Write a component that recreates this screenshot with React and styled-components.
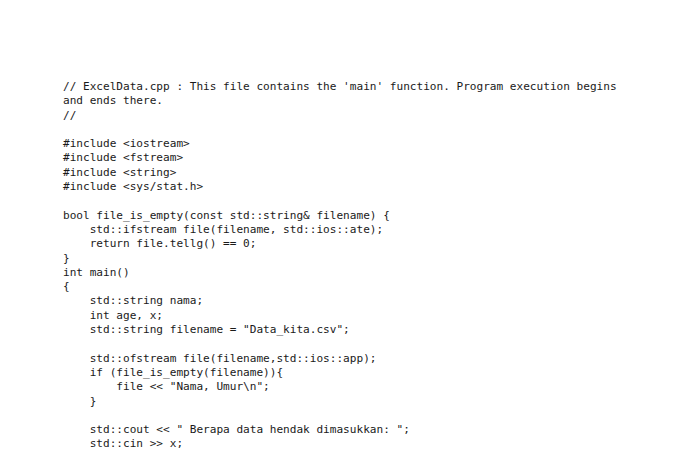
import styled, { createGlobalStyle } from "styled-components";

const GlobalStyle = createGlobalStyle`
  html, body {
    margin: 0;
    padding: 0;
    background: #ffffff;
  }
`;

const Page = styled.div`
  width: 680px;
  height: 459px;
  overflow: hidden;
  background: #ffffff;
  padding: 80px 0 0 63px;
  box-sizing: border-box;
`;

const Code = styled.pre`
  margin: 0;
  font-family: "DejaVu Sans Mono", "Liberation Mono", monospace;
  font-size: 11.08px;
  line-height: 14.3px;
  color: #1a1a1a;
  white-space: pre;
`;

const source = `// ExcelData.cpp : This file contains the 'main' function. Program execution begins
and ends there.
//

#include <iostream>
#include <fstream>
#include <string>
#include <sys/stat.h>

bool file_is_empty(const std::string& filename) {
    std::ifstream file(filename, std::ios::ate);
    return file.tellg() == 0;
}
int main()
{
    std::string nama;
    int age, x;
    std::string filename = "Data_kita.csv";

    std::ofstream file(filename,std::ios::app);
    if (file_is_empty(filename)){
        file << "Nama, Umur\\n";
    }

    std::cout << " Berapa data hendak dimasukkan: ";
    std::cin >> x;`;

const App = () => (
  <>
    <GlobalStyle />
    <Page>
      <Code>{source}</Code>
    </Page>
  </>
);

export default App;
